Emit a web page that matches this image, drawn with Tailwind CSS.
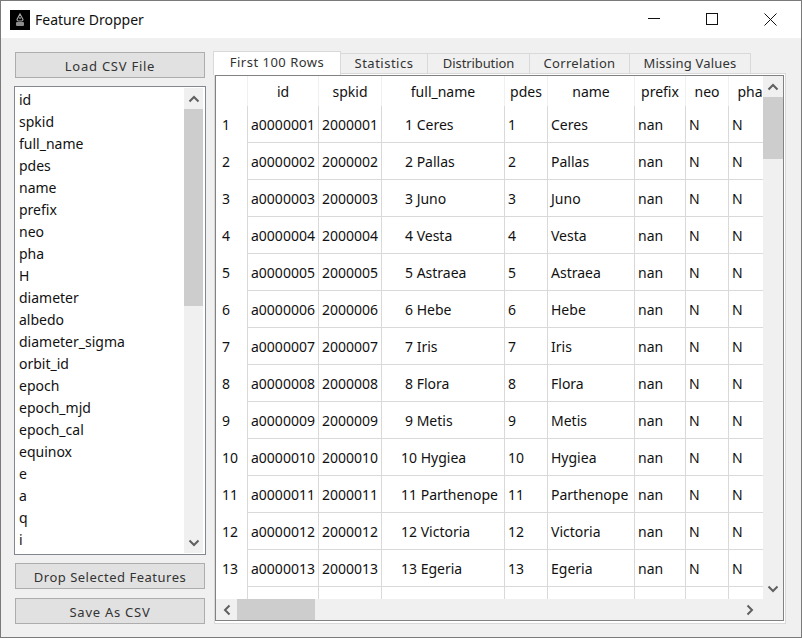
<!DOCTYPE html>
<html lang="en">
<head>
  <meta charset="UTF-8" />
  <title>Feature Dropper</title>
  <script src="https://cdn.jsdelivr.net/npm/@tailwindcss/browser@4"></script>
</head>
<body class="bg-white">
  <div class="w-[802px] h-[639px] overflow-hidden font-['Noto_Sans',sans-serif] text-[14px] text-[#111]">
    <div class="w-[802px] h-[638px] border border-[#7a7a7a] bg-[#f0f0f0] flex flex-col">
      <!-- Title bar -->
      <div class="h-[37px] bg-white flex items-center shrink-0">
        <svg class="ml-[9px]" width="20" height="20" viewBox="0 0 20 20">
          <rect width="20" height="20" fill="#000" />
          <path d="M10 4 L13 9.5 Q13 11 11.5 11 H8.5 Q7 11 7 9.5 Z" fill="none" stroke="#a8a8a8" stroke-width="1.1" />
          <path d="M10 7 V9" stroke="#d0d0d0" stroke-width="1" />
          <rect x="6" y="12" width="8" height="4" rx="1" fill="#8c8c8c" />
        </svg>
        <span class="ml-[5px] text-[14px]">Feature Dropper</span>
        <div class="ml-auto flex items-center">
          <svg class="mr-[45px]" width="13" height="13" viewBox="0 0 13 13" stroke="#111" fill="none"><path d="M0 5.5 H12" /></svg>
          <svg class="mr-[45px]" width="13" height="13" viewBox="0 0 13 13" stroke="#111" fill="none"><rect x="0.5" y="0.5" width="11" height="11" /></svg>
          <svg class="mr-[24px]" width="13" height="13" viewBox="0 0 13 13" stroke="#111" fill="none"><path d="M0.5 0.5 L12.5 12.5 M12.5 0.5 L0.5 12.5" /></svg>
        </div>
      </div>

      <div class="flex flex-1 min-h-0">
        <!-- Left column -->
        <div class="w-[192px] ml-[13px] flex flex-col shrink-0">
          <button class="mt-[14px] mx-[1px] h-[26px] pt-[4px] bg-[#e1e1e1] border border-[#adadad] text-[13px] text-[#333] tracking-[0.75px]">Load CSV File</button>
          <div class="mt-[8px] h-[469px] border border-[#828790] bg-white flex">
            <div id="featureList" class="flex-1 pt-[2px] pl-[4px] overflow-hidden"></div>
            <div class="w-[19px] mr-[2px] my-[1px] bg-[#f0f0f0] flex flex-col">
              <div class="h-[21px] flex items-center justify-center">
                <svg width="12" height="8" viewBox="0 0 12 8" fill="none" stroke="#606060" stroke-width="2"><path d="M1.5 6.5 L6 2 L10.5 6.5" /></svg>
              </div>
              <div class="h-[197px] bg-[#cdcdcd]"></div>
              <div class="mt-auto h-[21px] flex items-center justify-center">
                <svg width="12" height="8" viewBox="0 0 12 8" fill="none" stroke="#606060" stroke-width="2"><path d="M1.5 1.5 L6 6 L10.5 1.5" /></svg>
              </div>
            </div>
          </div>
          <button class="mt-[8px] mx-[1px] h-[26px] pt-[4px] bg-[#e1e1e1] border border-[#adadad] text-[13px] text-[#333] tracking-[0.5px]">Drop Selected Features</button>
          <button class="mt-[9px] mx-[1px] h-[26px] pt-[4px] bg-[#e1e1e1] border border-[#adadad] text-[13px] text-[#333] tracking-[0.75px]">Save As CSV</button>
        </div>

        <!-- Right column -->
        <div class="ml-[7px] mt-[13px] w-[573px] shrink-0 flex flex-col">
          <div class="relative h-[24px] flex items-end z-10 text-[13px] text-[#333]">
            <div class="w-[128px] h-[24px] bg-white border border-b-0 border-[#d9d9d9] tracking-[0.5px] flex items-center justify-center pb-[2px]">First 100 Rows</div>
            <div class="w-[87px] h-[21px] mb-[1px] pt-[1px] border border-l-0 border-[#d9d9d9] tracking-[0.5px] flex items-center justify-center">Statistics</div>
            <div class="w-[102px] h-[21px] mb-[1px] pt-[1px] border border-l-0 border-[#d9d9d9] tracking-[-0.1px] flex items-center justify-center">Distribution</div>
            <div class="w-[100px] h-[21px] mb-[1px] pt-[1px] border border-l-0 border-[#d9d9d9] tracking-[0.3px] flex items-center justify-center">Correlation</div>
            <div class="w-[121px] h-[21px] mb-[1px] pt-[1px] border border-l-0 border-[#d9d9d9] tracking-[0.2px] flex items-center justify-center">Missing Values</div>
          </div>
          <!-- Tab pane -->
          <div class="ml-[1px] -mt-[2px] w-[572px] h-[551px] border border-[#d9d9d9] bg-white pt-[1px] pr-[1px] pb-[2px]">
            <div class="w-[569px] h-[546px] border border-[#828282] flex flex-col">
              <div class="flex h-[523px]">
                <div id="dataTable" class="w-[547px] overflow-hidden bg-white"></div>
                <div class="w-[20px] bg-[#f0f0f0] flex flex-col">
                  <div class="h-[21px] flex items-center justify-center">
                    <svg width="12" height="8" viewBox="0 0 12 8" fill="none" stroke="#606060" stroke-width="2"><path d="M1.5 6.5 L6 2 L10.5 6.5" /></svg>
                  </div>
                  <div class="h-[62px] bg-[#cdcdcd]"></div>
                  <div class="mt-auto h-[21px] flex items-center justify-center">
                    <svg width="12" height="8" viewBox="0 0 12 8" fill="none" stroke="#606060" stroke-width="2"><path d="M1.5 1.5 L6 6 L10.5 1.5" /></svg>
                  </div>
                </div>
              </div>
              <div class="flex-1 bg-[#f0f0f0] flex items-stretch">
                <div class="w-[21px] flex items-center justify-center">
                  <svg width="8" height="12" viewBox="0 0 8 12" fill="none" stroke="#606060" stroke-width="2"><path d="M6.5 1.5 L2 6 L6.5 10.5" /></svg>
                </div>
                <div class="w-[78px] bg-[#cdcdcd]"></div>
                <div class="ml-auto mr-[23px] w-[21px] flex items-center justify-center">
                  <svg width="8" height="12" viewBox="0 0 8 12" fill="none" stroke="#606060" stroke-width="2"><path d="M1.5 1.5 L6 6 L1.5 10.5" /></svg>
                </div>
              </div>
            </div>
          </div>
        </div>
      </div>
    </div>
  </div>

  <script>
    const features = ["id","spkid","full_name","pdes","name","prefix","neo","pha","H","diameter","albedo","diameter_sigma","orbit_id","epoch","epoch_mjd","epoch_cal","equinox","e","a","q","i"];
    const names = ["Ceres","Pallas","Juno","Vesta","Astraea","Hebe","Iris","Flora","Metis","Hygiea","Parthenope","Victoria","Egeria"];

    // Left list box
    document.getElementById("featureList").innerHTML = features
      .map(f => `<div class="h-[22px] leading-[22px] whitespace-nowrap">${f}</div>`)
      .join("");

    // Column widths include the 1px grid line on the right
    const headCell = "shrink-0 h-[30px] flex items-center justify-center overflow-hidden whitespace-nowrap border-r border-[#f0f0f0]";
    const cell = "shrink-0 h-[37px] flex items-center pl-[3px] whitespace-nowrap border-r border-b border-[#d9d9d9]";
    const widths = ["w-[71px]","w-[63px]","w-[123px]","w-[43px]","w-[87px]","w-[51px]","w-[43px]","w-[43px]"];
    const heads = ["id","spkid","full_name","pdes","name","prefix","neo","pha"];

    let html = `<div class="flex"><div class="w-[32px] shrink-0 h-[30px] border-r border-[#f0f0f0]"></div>`;
    heads.forEach((h, i) => { html += `<div class="${headCell} ${widths[i]}">${h}</div>`; });
    html += `</div>`;

    for (let r = 1; r <= 14; r++) {
      const name = names[r - 1] || "";
      const id = String(r).padStart(7, "0");
      const cols = name
        ? ["a" + id, String(2000000 + r), r + " " + name, String(r), name, "nan", "N", "N"]
        : ["", "", "", "", "", "", "", ""];
      html += `<div class="flex"><div class="w-[32px] shrink-0 h-[37px] flex items-center pl-[6px] border-r border-[#d9d9d9]">${name ? r : ""}</div>`;
      cols.forEach((c, i) => {
        const indent = i === 2 ? (r < 10 ? "pl-[23px]" : "pl-[19px]") : "";
        html += `<div class="${cell} ${widths[i]} ${indent}">${c}</div>`;
      });
      html += `</div>`;
    }
    document.getElementById("dataTable").innerHTML = html;
  </script>
</body>
</html>
